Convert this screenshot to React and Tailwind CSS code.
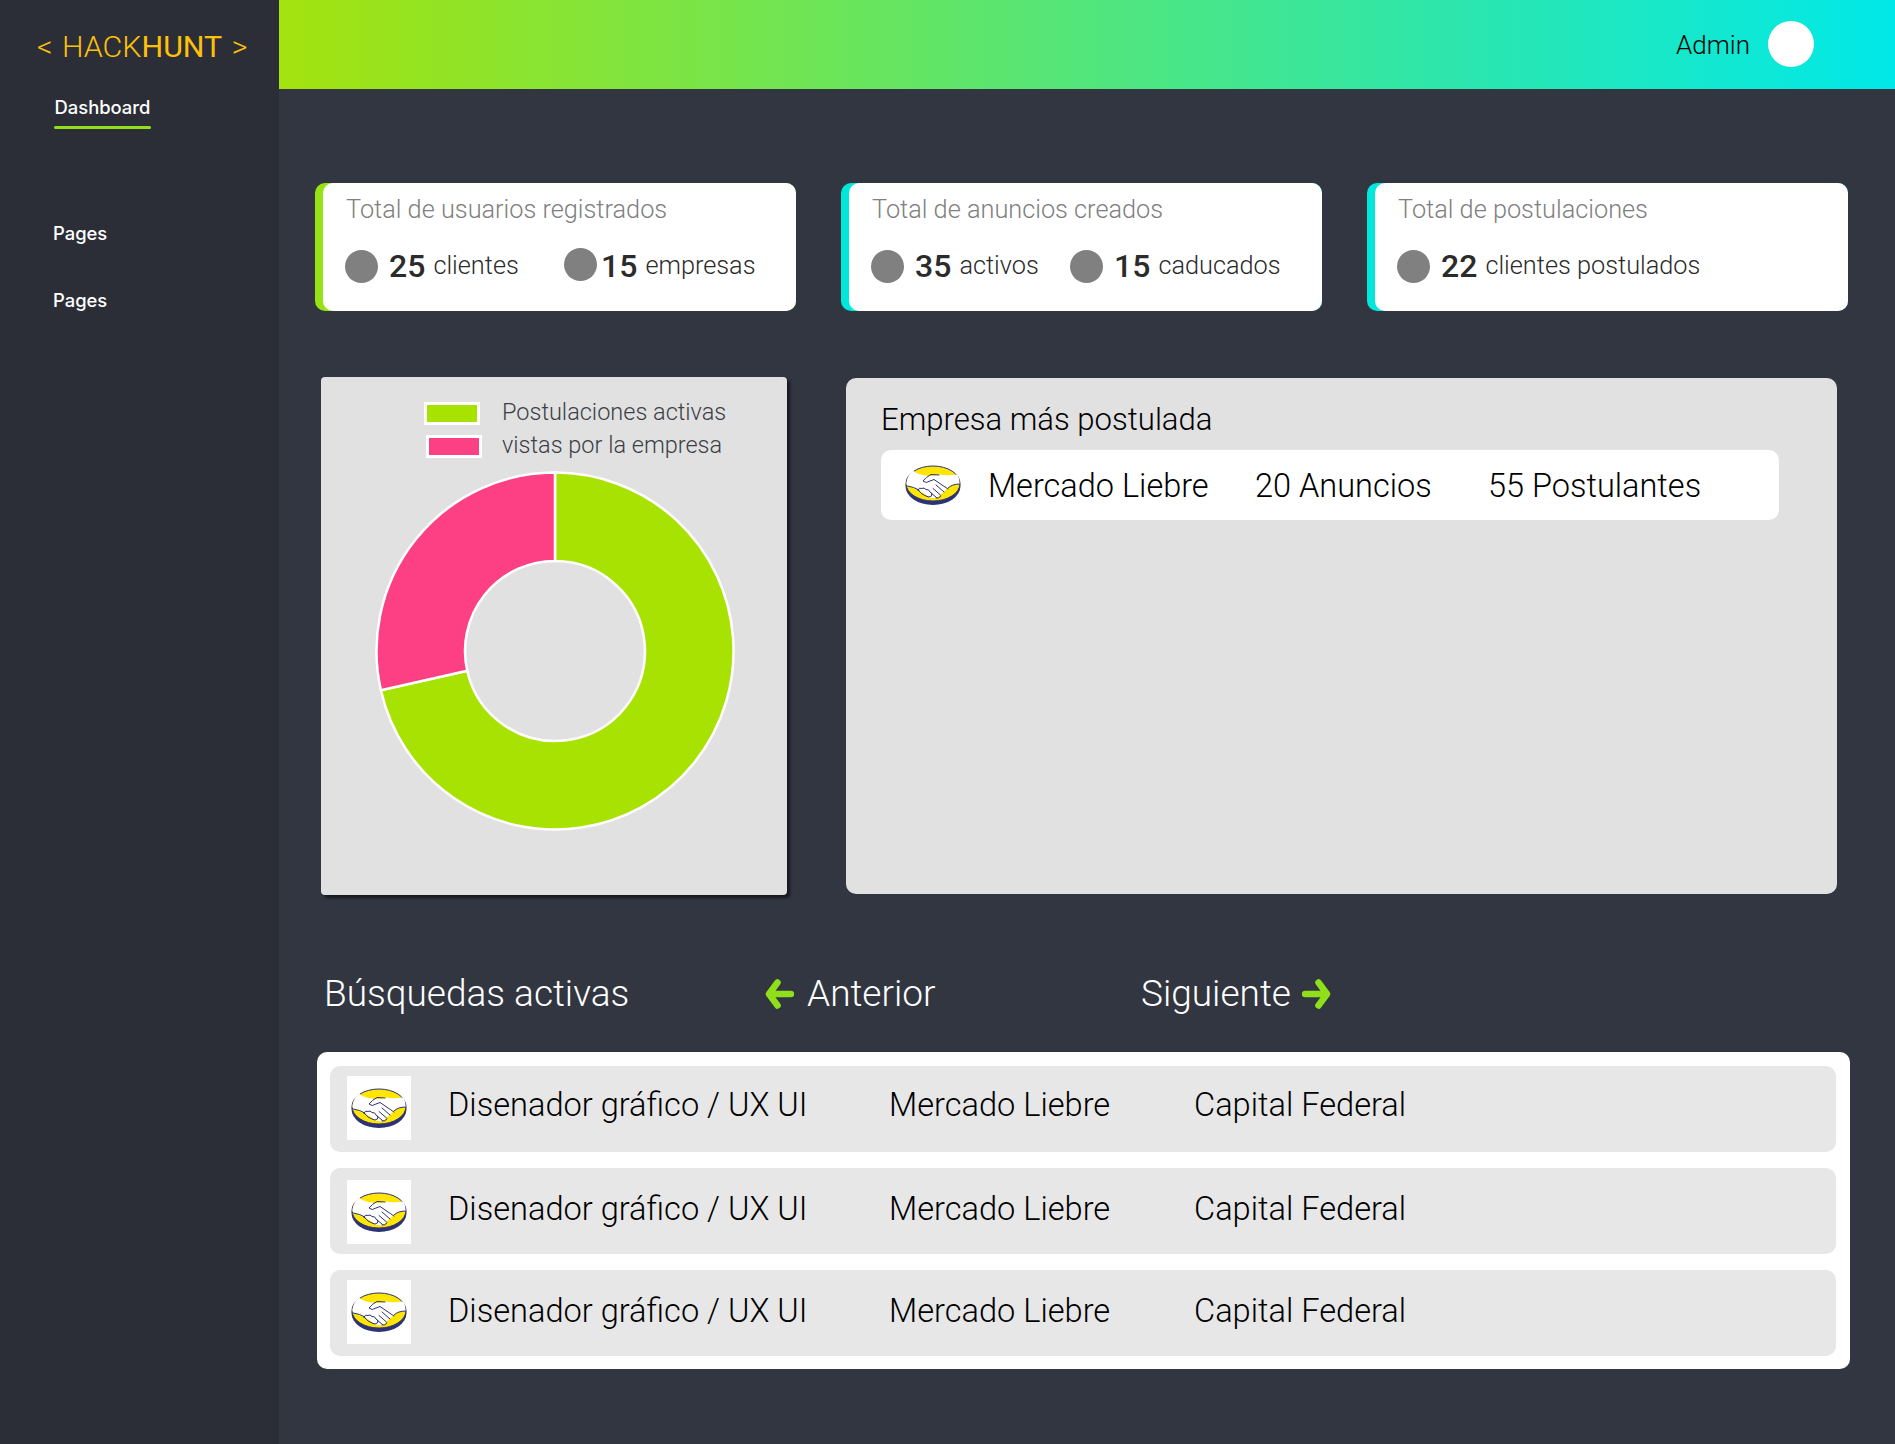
import React from 'react';

const searches = [
  { box: 'mt-0', logo: 'mt-[10px]', text: 'h-[78px]' },
  { box: 'mt-[16px]', logo: 'mt-[12px]', text: 'h-[82px]' },
  { box: 'mt-[16px]', logo: 'mt-[10px]', text: 'h-[82px]' },
];

const MeliLogo = ({ className }) => (
  <svg viewBox="0 0 56 40" className={className}>
    <ellipse cx="28" cy="21" rx="27.5" ry="19" fill="#2d3277" />
    <ellipse cx="28" cy="18.5" rx="27" ry="17.5" fill="#ffe600" stroke="#2d3277" strokeWidth="1" />
    <path
      d="M1.5 17 Q3 9 8 5.8 Q13 10 24 11 Q30 11 34 9.5 Q42 11 52.5 9.5 Q55 14 54.5 19 Q47 19 43 23 L32 33 Q26 34 22 31 Q14 24 2.5 21 Q1.2 19 1.5 17Z"
      fill="#fff"
    />
    <g fill="none" stroke="#2d3277" strokeWidth="1" strokeLinecap="round" strokeLinejoin="round">
      <path d="M34 10 L26 9.5 Q21 12 18 16 Q21 19 25 16 L29 14.5 L43 24" />
      <path d="M39 27 L31 20 M35.5 30 L28 23.5 M31.5 32.5 L26 28" />
      <path d="M2.5 21 Q9 22 14 25 M43 23 Q47 19 54.5 19" />
      <path d="M13 25 Q14 22 17 23.5 Q19 22 21 24.5 Q24 24 25 27 Q28 28 26.5 31 Q24 33 21 31 Q17 30 13 25Z" />
      <path d="M31 33 Q34 34 36 31" />
    </g>
  </svg>
);

const Arrow = ({ left }) => (
  <svg viewBox="0 0 30 30" className="w-[30px] h-[30px]">
    <path
      d={left ? 'M27 15H6M13.5 3.5L5 15L13.5 26.5' : 'M3 15H24M16.5 3.5L25 15L16.5 26.5'}
      fill="none"
      stroke="#8fe01a"
      strokeWidth="6.5"
      strokeLinecap="round"
      strokeLinejoin="round"
    />
  </svg>
);

const Dot = ({ className = '' }) => (
  <span className={`w-[33px] h-[33px] rounded-full bg-[#808080] shrink-0 ${className}`} />
);

const Stat = ({ value, label, className = '', dotClass = '', numClass = 'ml-[11px]' }) => (
  <div className={`flex items-center ${className}`}>
    <Dot className={dotClass} />
    <span className={`text-[32px] leading-none font-medium text-[#2b2b2b] ${numClass}`}>{value}</span>
    <span className="ml-[8px] text-[25.3px] leading-none font-light text-[#2b2b2b]">{label}</span>
  </div>
);

const Card = ({ title, accent, children }) => (
  <div className={`w-[481px] h-[128px] rounded-[10px] ${accent}`}>
    <div className="ml-[8px] h-full rounded-[10px] bg-white pl-[23px] pt-[10px]">
      <p className="text-[25.3px] leading-[34px] font-light text-[#808080]">{title}</p>
      <div className="mt-[22px] -ml-[1px] flex items-center h-[34px]">{children}</div>
    </div>
  </div>
);

const Donut = () => (
  <svg viewBox="-181 -181 362 362" className="block w-[362px] h-[362px] ml-[53px] mt-[7px]">
    <path
      d="M0 -178.5A178.5 178.5 0 1 1 -174.1 39.3L-87.8 19.8A90 90 0 1 0 0 -90Z"
      fill="#a8e203"
      stroke="#fff"
      strokeWidth="2.5"
    />
    <path
      d="M-174.1 39.3A178.5 178.5 0 0 1 0 -178.5L0 -90A90 90 0 0 0 -87.8 19.8Z"
      fill="#fd3f83"
      stroke="#fff"
      strokeWidth="2.5"
    />
  </svg>
);

export default function App() {
  return (
    <div className="flex min-h-[1444px] font-[Roboto,sans-serif]">
      <aside className="w-[279px] shrink-0 bg-[#2b2e37]">
        <div className="mt-[29px] ml-[37px] h-[36px] text-[30.4px] leading-[36px] whitespace-nowrap font-light text-[#ffc107] [word-spacing:2px]">
          {'< HACK'}<span className="font-normal">HUNT</span>{' >'}
        </div>
        <nav className="font-[Inter,sans-serif] font-medium text-[18.4px] text-white">
          <div className="mt-[29px] ml-[54px] w-[97px] text-center leading-[26px] whitespace-nowrap">Dashboard</div>
          <div className="mt-[6px] ml-[54px] w-[97px] h-[3px] rounded-full bg-[#8fe01a]" />
          <div className="mt-[91px] ml-[53px] leading-[26px]">Pages</div>
          <div className="mt-[41px] ml-[53px] leading-[26px]">Pages</div>
        </nav>
      </aside>

      <main className="flex-1 bg-[#323640]">
        <header className="h-[89px] flex items-center justify-end pr-[81px] bg-linear-to-r/srgb from-[#a4e30e] to-[#00e8e8]">
          <span className="mt-[2px] text-[26px] font-light text-black">Admin</span>
          <span className="ml-[18px] -mt-[2px] w-[46px] h-[46px] rounded-full bg-white" />
        </header>

        <div className="pl-[36px]">
          <div className="mt-[94px] flex gap-[45px]">
            <Card title="Total de usuarios registrados" accent="bg-[#96e214]">
              <Stat value="25" label="clientes" className="w-[219px]" />
              <Stat value="15" label="empresas" dotClass="-mt-[4px]" numClass="ml-[4px]" />
            </Card>
            <Card title="Total de anuncios creados" accent="bg-[#00e8dc]">
              <Stat value="35" label="activos" className="w-[199px]" />
              <Stat value="15" label="caducados" />
            </Card>
            <Card title="Total de postulaciones" accent="bg-[#00e8dc]">
              <Stat value="22" label="clientes postulados" />
            </Card>
          </div>

          <div className="mt-[66px] flex items-start">
            <section className="ml-[6px] w-[466px] h-[518px] rounded-[4px] bg-[#e1e1e1] pt-[20px] shadow-[3px_3px_3px_rgba(0,0,0,0.55)]">
              <div className="ml-[103px] h-[66px] grid grid-cols-[78px_auto] grid-rows-2 items-center text-[23.5px] leading-[28px] font-light text-[#3c3f46] whitespace-nowrap">
                <span className="w-[56px] h-[23px] bg-[#a8e203] border-[3px] border-white" />
                <span className="-mt-[4px]">Postulaciones activas</span>
                <span className="ml-[2px] w-[56px] h-[23px] bg-[#fd3f83] border-[3px] border-white" />
                <span className="-mt-[4px]">vistas por la empresa</span>
              </div>
              <Donut />
            </section>

            <section className="ml-[59px] mt-[1px] w-[991px] h-[516px] rounded-[10px] bg-[#e1e1e1] pl-[35px] pt-[23px]">
              <h2 className="text-[31.1px] leading-[38px] font-light text-black">Empresa más postulada</h2>
              <div className="mt-[11px] w-[898px] h-[70px] rounded-[10px] bg-white flex items-center text-[32.5px] font-light text-black whitespace-nowrap">
                <MeliLogo className="ml-[24px] w-[56px] h-[40px] shrink-0" />
                <span className="ml-[27px] mt-[3px] w-[267px]">Mercado Liebre</span>
                <span className="mt-[3px] w-[233px]">20 Anuncios</span>
                <span className="mt-[3px]">55 Postulantes</span>
              </div>
            </section>
          </div>

          <div className="mt-[74px] h-[50px] pl-[9px] flex items-center text-[37px] font-light text-white whitespace-nowrap">
            <span className="w-[440px]">Búsquedas activas</span>
            <Arrow left />
            <span className="ml-[13px] w-[334px]">Anterior</span>
            <span className="w-[161px]">Siguiente</span>
            <Arrow />
          </div>

          <div className="mt-[33px] ml-[2px] w-[1533px] h-[317px] rounded-[10px] bg-white pl-[13px] pr-[14px] pt-[14px]">
            {searches.map((s, i) => (
              <div key={i} className={`h-[86px] rounded-[10px] bg-[#e7e7e7] pl-[17px] flex items-start ${s.box}`}>
                <div className={`w-[64px] h-[64px] bg-white flex items-center justify-center shrink-0 ${s.logo}`}>
                  <MeliLogo className="w-[56px] h-[40px]" />
                </div>
                <div className={`ml-[37px] flex items-center text-[32.6px] font-light text-black whitespace-nowrap ${s.text}`}>
                  <span className="w-[441px]">Disenador gráfico / UX UI</span>
                  <span className="w-[305px]">Mercado Liebre</span>
                  <span>Capital Federal</span>
                </div>
              </div>
            ))}
          </div>
        </div>
      </main>
    </div>
  );
}
